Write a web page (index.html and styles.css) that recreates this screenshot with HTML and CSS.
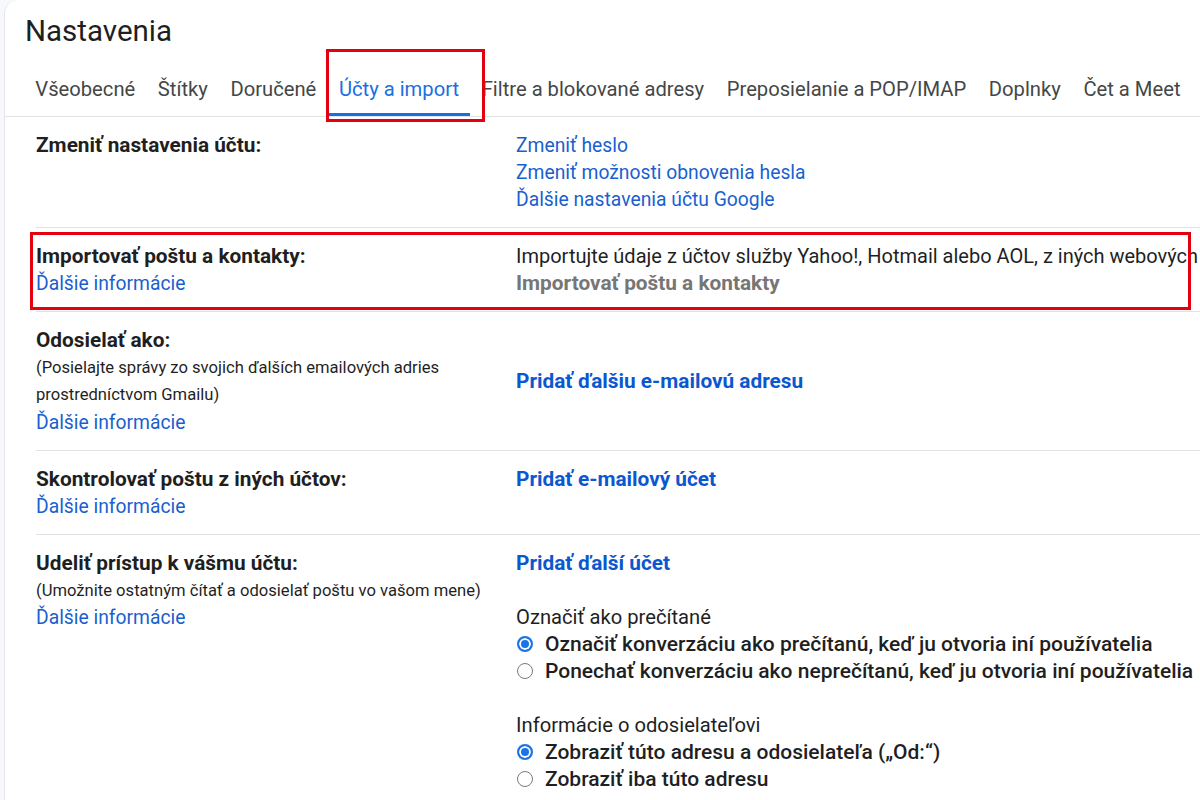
FILE: index.html
```html
<!DOCTYPE html>
<html lang="sk">
<head>
    <meta charset="utf-8">
    <title>Nastavenia</title>
    <link rel="stylesheet" href="styles.css">
</head>
<body>
    <div class="panel">
        <h1 class="title">Nastavenia</h1>

        <nav class="tabs">
            <a class="tab">Všeobecné</a>
            <a class="tab">Štítky</a>
            <a class="tab">Doručené</a>
            <a class="tab active">Účty a import<span class="mark mark-tab"></span></a>
            <a class="tab">Filtre a blokované adresy</a>
            <a class="tab">Preposielanie a POP/IMAP</a>
            <a class="tab">Doplnky</a>
            <a class="tab">Čet a Meet</a>
        </nav>

        <div class="rows">
            <div class="row">
                <div class="label">
                    <div class="name">Zmeniť nastavenia účtu:</div>
                </div>
                <div class="value">
                    <a class="link">Zmeniť heslo</a>
                    <a class="link">Zmeniť možnosti obnovenia hesla</a>
                    <a class="link">Ďalšie nastavenia účtu Google</a>
                </div>
            </div>

            <div class="row marked">
                <span class="mark mark-row"></span>
                <div class="label">
                    <div class="name">Importovať poštu a kontakty:</div>
                    <a class="link">Ďalšie informácie</a>
                </div>
                <div class="value">
                    <div class="text">Importujte údaje z účtov služby Yahoo!, Hotmail alebo AOL, z iných webových poskytovateľov alebo z účtov POP3/IMAP.</div>
                    <div class="action disabled">Importovať poštu a kontakty</div>
                </div>
            </div>

            <div class="row">
                <div class="label">
                    <div class="name">Odosielať ako:</div>
                    <div class="note">(Posielajte správy zo svojich ďalších emailových adries prostredníctvom Gmailu)</div>
                    <a class="link">Ďalšie informácie</a>
                </div>
                <div class="value middle">
                    <a class="action">Pridať ďalšiu e-mailovú adresu</a>
                </div>
            </div>

            <div class="row">
                <div class="label">
                    <div class="name">Skontrolovať poštu z iných účtov:</div>
                    <a class="link">Ďalšie informácie</a>
                </div>
                <div class="value">
                    <a class="action">Pridať e-mailový účet</a>
                </div>
            </div>

            <div class="row">
                <div class="label">
                    <div class="name">Udeliť prístup k vášmu účtu:</div>
                    <div class="note">(Umožnite ostatným čítať a odosielať poštu vo vašom mene)</div>
                    <a class="link">Ďalšie informácie</a>
                </div>
                <div class="value">
                    <a class="action">Pridať ďalší účet</a>

                    <div class="group">
                        <div class="group-title">Označiť ako prečítané</div>
                        <label class="option"><span class="radio checked"></span>Označiť konverzáciu ako prečítanú, keď ju otvoria iní používatelia</label>
                        <label class="option"><span class="radio"></span>Ponechať konverzáciu ako neprečítanú, keď ju otvoria iní používatelia</label>
                    </div>

                    <div class="group">
                        <div class="group-title">Informácie o odosielateľovi</div>
                        <label class="option"><span class="radio checked"></span>Zobraziť túto adresu a odosielateľa („Od:“)</label>
                        <label class="option"><span class="radio"></span>Zobraziť iba túto adresu</label>
                    </div>
                </div>
            </div>
        </div>
    </div>
</body>
</html>
```

FILE: styles.css
```css
body {
    margin: 0;
    background: #f6f8fc;
    font-family: Roboto, "Noto Sans", Arial, sans-serif;
    color: #1f1f1f;
    overflow: hidden;
}
a { cursor: pointer; }

.panel {
    margin-left: 4px;
    height: 800px;
    background: #fff;
    border-left: 1px solid #e6e6e6;
    border-top-left-radius: 14px;
    overflow: hidden;
}

.title {
    margin: 0;
    padding: 11px 0 0 20px;
    height: 44px;
    font-size: 29.5px;
    font-weight: 400;
    line-height: 40px;
    color: #1f1f1f;
}

.tabs {
    display: flex;
    white-space: nowrap;
    padding: 0 0 0 19px;
    margin-top: 8px;
    border-bottom: 1px solid #e3e3e3;
}
.tab {
    position: relative;
    padding: 0 11.3px;
    height: 53px;
    line-height: 52px;
    font-size: 20.2px;
    color: #444746;
    box-sizing: border-box;
}
.tab.active {
    color: #1a6fe0;
    border-bottom: 3px solid #1a6fe0;
}

/* red callouts drawn over the screenshot */
.mark {
    position: absolute;
    z-index: 1;
    border: 3px solid #e3000f;
    pointer-events: none;
}
.mark-tab { left: -2px; right: -15px; top: -14px; bottom: -9px; }
.mark-row { left: -6px; right: 9px; top: 4px; bottom: 1px; }

.rows { margin-left: 31px; }
.row {
    position: relative;
    display: flex;
    padding: 14.5px 0;
    border-bottom: 1px solid #e3e3e3;
    font-size: 20px;
    line-height: 27px;
}
.label { width: 480px; flex: none; }
.value { flex: 1; min-width: 0; white-space: nowrap; }
.value.middle { align-self: center; }

.name { font-size: 20.8px; font-weight: 700; color: #1f1f1f; }
.note { font-size: 16.6px; line-height: 27.5px; color: #1f1f1f; width: 462px; }
.link { display: block; font-size: 19.3px; color: #1a5fd0; }
.text { color: #1f1f1f; }
.action { display: block; font-size: 20.8px; font-weight: 700; color: #0b57d0; }
.action.disabled { color: #767676; }

.group { margin-top: 27px; }
.group-title { font-size: 20.2px; }
.option {
    display: flex;
    align-items: center;
    font-size: 21px;
    font-weight: 500;
}
.radio {
    width: 16px;
    height: 16px;
    margin: 0 12px 0 1px;
    border: 1px solid #7a7a7a;
    border-radius: 50%;
    box-sizing: border-box;
    flex: none;
}
.radio.checked {
    border: 2px solid #1a73e8;
    background: #1a73e8;
    box-shadow: inset 0 0 0 2px #fff;
}
```
